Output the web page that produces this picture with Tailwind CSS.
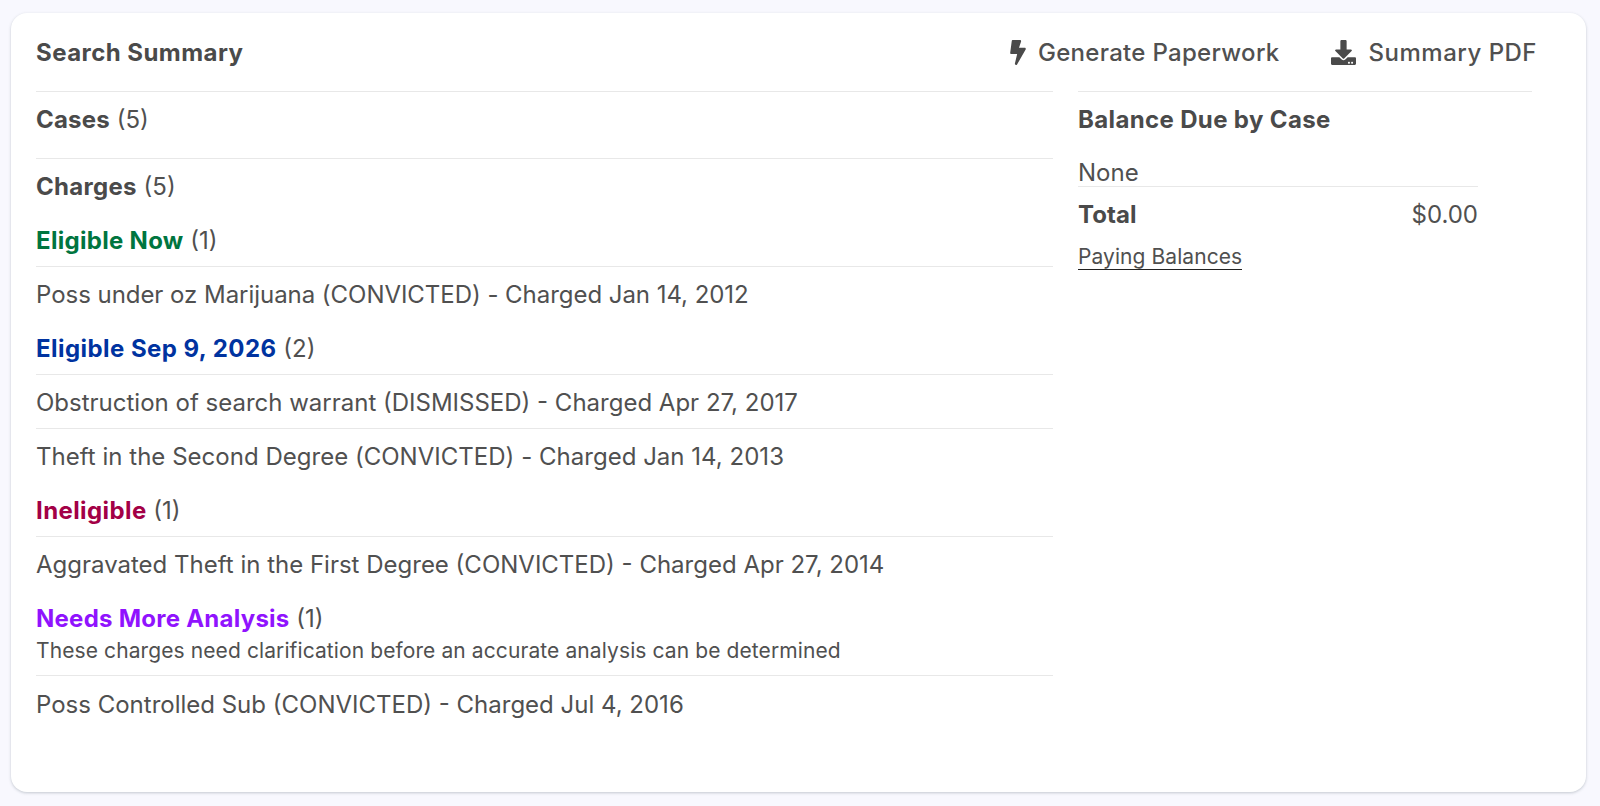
<!DOCTYPE html>
<html>
<head>
<script src="https://cdn.jsdelivr.net/npm/@tailwindcss/browser@4"></script>
</head>
<body class="bg-[#f8f8fe] font-['Inter',sans-serif] text-[#505050] text-[24px] leading-[32px]">
<div class="h-[806px] pt-[13px] pl-[11px] pr-[14px] overflow-hidden">
  <main class="h-[779px] bg-white rounded-[16px] shadow-[0_1px_3px_rgba(60,80,90,0.28)] pl-[25px] pr-[54px]">
    <header class="h-[78px] pt-[1px] flex items-center justify-between">
      <h1 class="font-bold text-[#4a4a4a] tracking-[0.45px]">Search Summary</h1>
      <div class="flex items-center gap-[51px] -mr-[5px]">
        <a class="flex items-center gap-[12px] font-medium tracking-[0.3px]">
          <svg class="w-[16px] h-[25px]" viewBox="0 0 320 512" fill="#4a4a4a"><path d="M296 160H180.600l42.600-129.800C227.200 15 215.700 0 200 0H56C44 0 33.800 8.900 32.200 20.800l-32 240C-1.700 275.200 9.500 288 24 288h118.700L96.600 482.500c-3.600 15.200 8 29.500 23.300 29.500 8.400 0 16.400-4.400 20.800-12l176-304c9.300-15.900-2.200-36-20.700-36z"/></svg>
          Generate Paperwork
        </a>
        <a class="flex items-center gap-[13px] font-medium tracking-[0.5px]">
          <svg class="w-[25px] h-[25px]" viewBox="0 0 512 512" fill="#4a4a4a"><path d="M216 0h80c13.300 0 24 10.700 24 24v168h87.700c17.800 0 26.700 21.500 14.100 34.100L269.700 378.300c-7.500 7.500-19.800 7.500-27.300 0L90.100 226.100c-12.600-12.600-3.700-34.100 14.100-34.100H192V24c0-13.300 10.700-24 24-24zm296 376v112c0 13.300-10.700 24-24 24H24c-13.300 0-24-10.700-24-24V376c0-13.300 10.700-24 24-24h146.700l49 49c20.100 20.100 52.500 20.100 72.600 0l49-49H488c13.300 0 24 10.700 24 24zm-124 88c0-11-9-20-20-20s-20 9-20 20 9 20 20 20 20-9 20-20zm64 0c0-11-9-20-20-20s-20 9-20 20 9 20 20 20 20-9 20-20z"/></svg>
          Summary PDF
        </a>
      </div>
    </header>
    <div class="flex gap-[25px]">
      <section class="w-[1017px]">
        <div class="border-t border-[#e8e8e8] h-[67px] pt-[12px]"><b class="font-bold text-[#4a4a4a] tracking-[0.2px]">Cases</b> (5)</div>
        <div class="border-t border-[#e8e8e8] pt-[12px] pb-[10px]"><b class="font-bold text-[#4a4a4a] tracking-[0.3px]">Charges</b> (5)</div>

        <div class="pt-[12px] pb-[9px] border-b border-[#e8e8e8]"><b class="font-bold tracking-[0.3px] text-[#00753f]">Eligible Now</b> (1)</div>
        <div class="pt-[12px] pb-[10px] tracking-[-0.04px]">Poss under oz Marijuana (CONVICTED) - Charged Jan 14, 2012</div>

        <div class="pt-[12px] pb-[9px] border-b border-[#e8e8e8]"><b class="font-bold tracking-[0.45px] text-[#0033a0]">Eligible Sep 9, 2026</b> (2)</div>
        <div class="pt-[12px] pb-[9px] border-b border-[#e8e8e8]">Obstruction of search warrant (DISMISSED) - Charged Apr 27, 2017</div>
        <div class="pt-[12px] pb-[10px] tracking-[0.02px]">Theft in the Second Degree (CONVICTED) - Charged Jan 14, 2013</div>

        <div class="pt-[12px] pb-[9px] border-b border-[#e8e8e8]"><b class="font-bold tracking-[0.4px] text-[#a30046]">Ineligible</b> (1)</div>
        <div class="pt-[12px] pb-[10px]">Aggravated Theft in the First Degree (CONVICTED) - Charged Apr 27, 2014</div>

        <div class="pt-[12px]"><b class="font-bold tracking-[0.25px] text-[#9013fe]">Needs More Analysis</b> (1)</div>
        <p class="text-[21px] tracking-[0.1px] leading-[32px] pb-[8px] border-b border-[#e8e8e8]">These charges need clarification before an accurate analysis can be determined</p>
        <div class="pt-[13px] pb-[10px]">Poss Controlled Sub (CONVICTED) - Charged Jul 4, 2016</div>
      </section>
      <aside class="flex-1">
        <div class="border-t border-[#e8e8e8] pt-[12px] h-[66px] font-bold text-[#4a4a4a] tracking-[0.36px]">Balance Due by Case</div>
        <div class="w-[400px]">
          <div class="h-[30px] pt-[2px] border-b border-[#e8e8e8] flex items-center">None</div>
          <div class="flex justify-between pt-[12px] pb-[9px]"><b class="font-bold text-[#4a4a4a] tracking-[0.1px]">Total</b><span>$0.00</span></div>
          <a class="inline-block text-[21px] tracking-[0.07px] leading-[24px] border-b border-[#222]">Paying Balances</a>
        </div>
      </aside>
    </div>
  </main>
</div>
</body>
</html>
